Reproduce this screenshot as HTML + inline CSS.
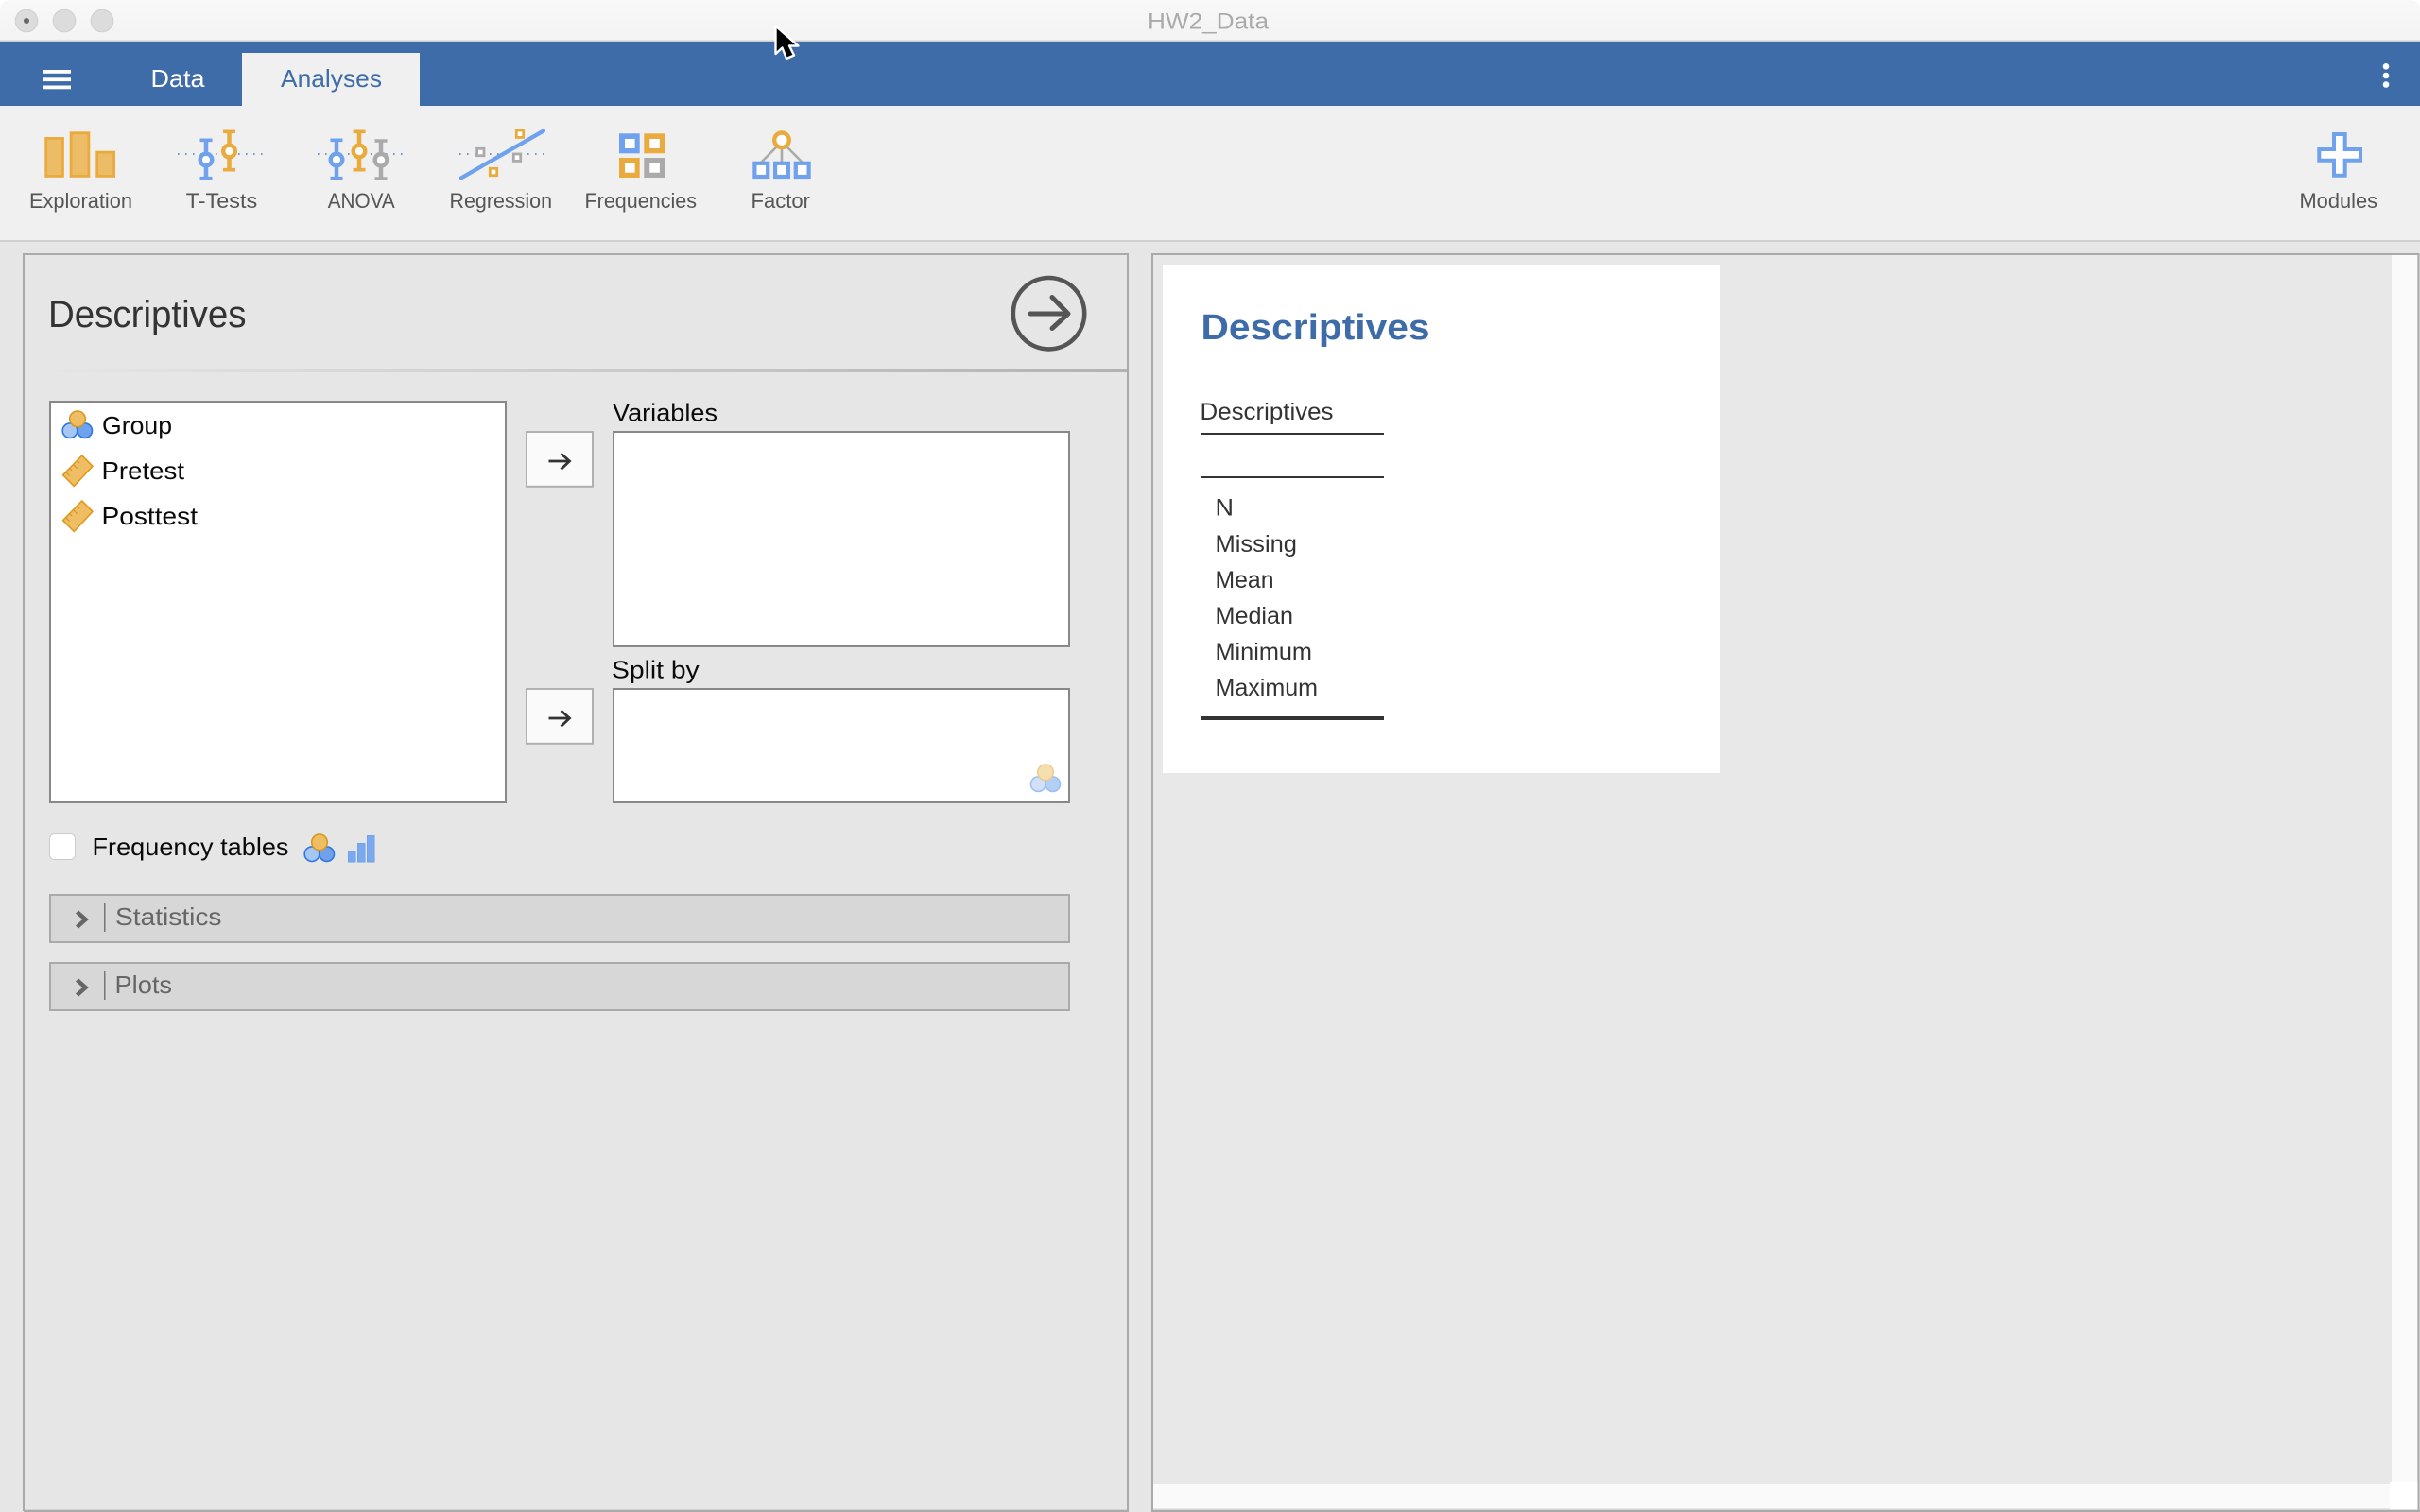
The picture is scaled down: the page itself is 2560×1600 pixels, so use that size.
<!DOCTYPE html>
<html lang="en">
<head>
<meta charset="utf-8">
<title>HW2_Data</title>
<style>
html,body{margin:0;padding:0;background:#fff;width:2560px;height:1600px;overflow:hidden}
svg{display:block}
text{font-family:"Liberation Sans",sans-serif}
</style>
</head>
<body>
<svg xmlns="http://www.w3.org/2000/svg" width="2560" height="1600" viewBox="0 0 2560 1600">
<defs>
  <linearGradient id="tb" x1="0" y1="0" x2="0" y2="1"><stop offset="0" stop-color="#f8f8f8"/><stop offset="1" stop-color="#f3f3f3"/></linearGradient>
  <linearGradient id="dv" x1="0" y1="0" x2="1" y2="0"><stop offset="0" stop-color="#e6e6e6"/><stop offset="1" stop-color="#b2b2b2"/></linearGradient>
  <g id="ruler">
    <polygon points="86.7,482 98,493.3 78.3,514.4 66.6,502.7" fill="#efbd63" stroke="#e09a1c" stroke-width="1.6" stroke-linejoin="round"/>
    <path d="M81.5,487.5l2.6,2.6M77.5,491.5l4.2,4.2M73.5,495.5l2.6,2.6M69.5,499.5l4.2,4.2" stroke="#cf962c" stroke-width="1.1" fill="none"/>
  </g>
</defs>

<!-- page background -->
<rect x="0" y="44" width="2560" height="1556" fill="#e6e6e6"/>

<!-- title bar -->
<path d="M0,44V10A10,10 0 0 1 10,0H2550A10,10 0 0 1 2560,10V44Z" fill="url(#tb)"/>
<rect x="0" y="42.5" width="2560" height="1.5" fill="#cdcdcd"/>
<circle cx="28" cy="22" r="11.8" fill="#dcdcdc" stroke="#cfcfcf"/>
<circle cx="28" cy="22" r="3" fill="#666"/>
<circle cx="68" cy="22" r="11.8" fill="#dcdcdc" stroke="#cfcfcf"/>
<circle cx="108" cy="22" r="11.8" fill="#dcdcdc" stroke="#cfcfcf"/>
<text x="1214" y="30.5" font-size="24" fill="#aaaaaa" textLength="128" lengthAdjust="spacingAndGlyphs">HW2_Data</text>

<!-- blue ribbon -->
<rect x="0" y="44" width="2560" height="68" fill="#3e6ca8"/>
<rect x="45" y="74" width="30" height="3.8" fill="#fff"/>
<rect x="45" y="82.3" width="30" height="3.8" fill="#fff"/>
<rect x="45" y="90.5" width="30" height="3.8" fill="#fff"/>
<rect x="256" y="56" width="188" height="56" fill="#f0f0f0"/>
<text x="159.5" y="92" font-size="26" fill="#ffffff" textLength="57" lengthAdjust="spacingAndGlyphs">Data</text>
<text x="297" y="92" font-size="26" fill="#3e6ca8" textLength="107" lengthAdjust="spacingAndGlyphs">Analyses</text>
<circle cx="2524" cy="70.3" r="3.3" fill="#fff"/>
<circle cx="2524" cy="80" r="3.3" fill="#fff"/>
<circle cx="2524" cy="89.5" r="3.3" fill="#fff"/>

<!-- toolbar -->
<rect x="0" y="112" width="2560" height="142" fill="#f0f0f0"/>
<rect x="0" y="254" width="2560" height="2" fill="#d0d0d0"/>

<!-- Exploration -->
<g fill="#ecbc66" stroke="#e9ab3e" stroke-width="2.8">
  <rect x="48.7" y="146.4" width="17.8" height="40"/>
  <rect x="75.1" y="140.7" width="18.8" height="45.7"/>
  <rect x="102.7" y="161.1" width="17.9" height="25.3"/>
</g>
<text x="31" y="220" font-size="22" fill="#555" textLength="109" lengthAdjust="spacingAndGlyphs">Exploration</text>

<!-- T-Tests -->
<line x1="188" y1="163" x2="279" y2="163" stroke="#4f78b8" stroke-width="1.5" stroke-dasharray="1.6 6.4"/>
<g fill="#fff">
  <path d="M211.5,148.3h13M211.5,188.7h13" stroke="#6fa1ec" stroke-width="3.6" fill="none"/>
  <path d="M218,148.3V188.7" stroke="#6fa1ec" stroke-width="4.5" fill="none"/>
  <circle cx="218" cy="169" r="6.3" stroke="#6fa1ec" stroke-width="4.4"/>
  <path d="M236,139.3h13M236,179.7h13" stroke="#e9ab3e" stroke-width="3.6" fill="none"/>
  <path d="M242.5,139.3V179.7" stroke="#e9ab3e" stroke-width="4.5" fill="none"/>
  <circle cx="242.5" cy="160" r="6.3" stroke="#e9ab3e" stroke-width="4.4"/>
</g>
<text x="196.7" y="220" font-size="22" fill="#555" textLength="75.5" lengthAdjust="spacingAndGlyphs">T-Tests</text>

<!-- ANOVA -->
<line x1="336" y1="163" x2="427" y2="163" stroke="#4f78b8" stroke-width="1.5" stroke-dasharray="1.6 6.4"/>
<g fill="#fff">
  <path d="M349.5,148.3h13M349.5,188.7h13" stroke="#6fa1ec" stroke-width="3.6" fill="none"/>
  <path d="M356,148.3V188.7" stroke="#6fa1ec" stroke-width="4.5" fill="none"/>
  <circle cx="356" cy="169" r="6.3" stroke="#6fa1ec" stroke-width="4.4"/>
  <path d="M373.5,139.3h13M373.5,179.7h13" stroke="#e9ab3e" stroke-width="3.6" fill="none"/>
  <path d="M380,139.3V179.7" stroke="#e9ab3e" stroke-width="4.5" fill="none"/>
  <circle cx="380" cy="160" r="6.3" stroke="#e9ab3e" stroke-width="4.4"/>
  <path d="M396.5,149h13M396.5,189h13" stroke="#aaaaaa" stroke-width="3.6" fill="none"/>
  <path d="M403,149V189" stroke="#aaaaaa" stroke-width="4.5" fill="none"/>
  <circle cx="403" cy="169.3" r="6.3" stroke="#aaaaaa" stroke-width="4.4"/>
</g>
<text x="346.7" y="220" font-size="22" fill="#555" textLength="71" lengthAdjust="spacingAndGlyphs">ANOVA</text>

<!-- Regression -->
<line x1="486" y1="163" x2="577" y2="163" stroke="#4f78b8" stroke-width="1.5" stroke-dasharray="1.6 6.4"/>
<line x1="488" y1="188.3" x2="575" y2="138.5" stroke="#6fa1ec" stroke-width="4.2" stroke-linecap="round"/>
<g fill="#fff" stroke-width="2.8">
  <rect x="546.3" y="138" width="7.4" height="7.4" stroke="#e9ab3e"/>
  <rect x="504.6" y="157.3" width="7.4" height="7.4" stroke="#aaaaaa"/>
  <rect x="543.3" y="163" width="7.4" height="7.4" stroke="#aaaaaa"/>
  <rect x="518.3" y="178.3" width="7.4" height="7.4" stroke="#e9ab3e"/>
</g>
<text x="475.5" y="220" font-size="22" fill="#555" textLength="108.5" lengthAdjust="spacingAndGlyphs">Regression</text>

<!-- Frequencies -->
<rect x="655" y="141.3" width="21.7" height="21" fill="#6fa1ec"/>
<rect x="661" y="147" width="10.6" height="10" fill="#fff"/>
<rect x="681.3" y="141.3" width="21.7" height="21" fill="#e9ab3e"/>
<rect x="687.3" y="147" width="10.6" height="10" fill="#fff"/>
<rect x="655" y="167" width="21.7" height="21" fill="#e9ab3e"/>
<rect x="661" y="172.7" width="10.6" height="10" fill="#fff"/>
<rect x="681.3" y="167" width="21.7" height="21" fill="#aaaaaa"/>
<rect x="687.3" y="172.7" width="10.6" height="10" fill="#fff"/>
<text x="618.5" y="220" font-size="22" fill="#555" textLength="118.5" lengthAdjust="spacingAndGlyphs">Frequencies</text>

<!-- Factor -->
<path d="M827,150L805,172M827,150V172M827,150L849,172" stroke="#aaaaaa" stroke-width="2.6" fill="none"/>
<circle cx="827" cy="148.3" r="7.8" fill="#fff" stroke="#e9ab3e" stroke-width="4.4"/>
<g fill="#fff" stroke="#6fa1ec" stroke-width="4.2">
  <rect x="798.4" y="172.8" width="13.8" height="14.2"/>
  <rect x="820.1" y="172.8" width="13.8" height="14.2"/>
  <rect x="841.8" y="172.8" width="13.8" height="14.2"/>
</g>
<text x="794.5" y="220" font-size="22" fill="#555" textLength="62.5" lengthAdjust="spacingAndGlyphs">Factor</text>

<!-- Modules -->
<path d="M2469,142H2480.7V158H2497V169.7H2480.7V185.7H2469V169.7H2453.3V158H2469Z" fill="#fff" stroke="#6fa1ec" stroke-width="4"/>
<text x="2432.5" y="220" font-size="22" fill="#555" textLength="82.5" lengthAdjust="spacingAndGlyphs">Modules</text>

<!-- left options panel -->
<path d="M25,1599V269H1193V1599" fill="#e6e6e6" stroke="#aaaaaa" stroke-width="2"/>
<rect x="25" y="1597.7" width="1169" height="2.3" fill="#aaaaaa"/>
<text x="51" y="346" font-size="40" fill="#333333" textLength="209.5" lengthAdjust="spacingAndGlyphs">Descriptives</text>
<rect x="40" y="390" width="1152" height="4" fill="url(#dv)"/>
<circle cx="1109.5" cy="331.7" r="37.7" fill="none" stroke="#555555" stroke-width="4.6"/>
<path d="M1090,332H1129M1113,314.5L1130,332L1113,347.5" fill="none" stroke="#555555" stroke-width="5" stroke-linecap="round" stroke-linejoin="round"/>

<!-- lists -->
<rect x="53" y="425" width="482" height="424" fill="#fff" stroke="#888888" stroke-width="2"/>
<rect x="649" y="457" width="482" height="227" fill="#fff" stroke="#888888" stroke-width="2"/>
<rect x="649" y="729" width="482" height="120" fill="#fff" stroke="#888888" stroke-width="2"/>

<!-- group icon row -->
<circle cx="74" cy="455.7" r="7.8" fill="#a6c7f4" stroke="#2f78e4" stroke-width="1.6"/>
<circle cx="89.7" cy="455.7" r="7.8" fill="#6fa1ec" stroke="#2f78e4" stroke-width="1.6"/>
<circle cx="82" cy="443.3" r="8.3" fill="#efbd63" stroke="#d8971e" stroke-width="1.5"/>
<text x="108" y="459" font-size="26" fill="#0a0a0a" textLength="74" lengthAdjust="spacingAndGlyphs">Group</text>

<use href="#ruler"/>
<text x="107.5" y="507" font-size="26" fill="#0a0a0a" textLength="87.5" lengthAdjust="spacingAndGlyphs">Pretest</text>
<use href="#ruler" y="48"/>
<text x="107.5" y="555" font-size="26" fill="#0a0a0a" textLength="101.5" lengthAdjust="spacingAndGlyphs">Posttest</text>

<!-- arrow buttons -->
<rect x="557" y="457" width="70" height="57.8" fill="#fafafa" stroke="#b0b0b0" stroke-width="2"/>
<path d="M580.5,488H602.5M593.5,480L602.5,488L593.5,496.5" fill="none" stroke="#333" stroke-width="2.8"/>
<rect x="557" y="729" width="70" height="57.8" fill="#fafafa" stroke="#b0b0b0" stroke-width="2"/>
<path d="M580.5,760H602.5M593.5,752L602.5,760L593.5,768.5" fill="none" stroke="#333" stroke-width="2.8"/>

<text x="648" y="445.7" font-size="26" fill="#0a0a0a" textLength="111" lengthAdjust="spacingAndGlyphs">Variables</text>
<text x="647" y="717.7" font-size="26" fill="#0a0a0a" textLength="92.7" lengthAdjust="spacingAndGlyphs">Split by</text>

<!-- split by faded icon -->
<circle cx="1098.3" cy="829.7" r="7.8" fill="#d2e1f9" stroke="#9dc0f3" stroke-width="1.6"/>
<circle cx="1113.7" cy="829.7" r="7.8" fill="#b3cff6" stroke="#9dc0f3" stroke-width="1.6"/>
<circle cx="1106" cy="817.3" r="8.3" fill="#f7deaf" stroke="#ebcb90" stroke-width="1.5"/>

<!-- checkbox -->
<rect x="52.5" y="882.5" width="27" height="27" rx="5" fill="#fff" stroke="#cccccc" stroke-width="1"/>
<text x="97.5" y="905" font-size="26" fill="#0a0a0a" textLength="208" lengthAdjust="spacingAndGlyphs">Frequency tables</text>
<circle cx="330" cy="903.7" r="7.8" fill="#a6c7f4" stroke="#2f78e4" stroke-width="1.6"/>
<circle cx="345.7" cy="903.7" r="7.8" fill="#6fa1ec" stroke="#2f78e4" stroke-width="1.6"/>
<circle cx="338" cy="891.3" r="8.3" fill="#efbd63" stroke="#d8971e" stroke-width="1.5"/>
<g fill="#7ba9ed" stroke="#6fa1ec" stroke-width="1">
  <rect x="368.5" y="900.5" width="7.5" height="11.5"/>
  <rect x="378.5" y="892.5" width="7.5" height="19.5"/>
  <rect x="388.5" y="884.5" width="7.5" height="27.5"/>
</g>

<!-- collapsible headers -->
<rect x="53" y="947" width="1078" height="50" fill="#d7d7d7" stroke="#aaaaaa" stroke-width="2"/>
<path d="M81.5,965L90.5,973L81.5,981" fill="none" stroke="#666" stroke-width="4.5"/>
<rect x="110" y="956" width="1.5" height="30" fill="#777"/>
<text x="122" y="979" font-size="26" fill="#666666" textLength="112.5" lengthAdjust="spacingAndGlyphs">Statistics</text>

<rect x="53" y="1019" width="1078" height="50" fill="#d7d7d7" stroke="#aaaaaa" stroke-width="2"/>
<path d="M81.5,1037L90.5,1045L81.5,1053" fill="none" stroke="#666" stroke-width="4.5"/>
<rect x="110" y="1028" width="1.5" height="30" fill="#777"/>
<text x="121.5" y="1051" font-size="26" fill="#666666" textLength="60.5" lengthAdjust="spacingAndGlyphs">Plots</text>

<!-- results panel -->
<path d="M1219,1599V269H2558.5V1599" fill="#e8e8e8" stroke="#aaaaaa" stroke-width="2"/>
<rect x="1218" y="1597.7" width="1342" height="2.3" fill="#aaaaaa"/>
<rect x="2530" y="270" width="27" height="1298" fill="#fafafa"/>
<rect x="1220" y="1570" width="1308" height="26" fill="#fafafa"/>
<rect x="2528" y="1568" width="29.5" height="29.5" fill="#ffffff"/>

<rect x="1230" y="280" width="590" height="538" fill="#ffffff"/>
<text x="1270.5" y="359" font-size="38" font-weight="700" fill="#3e6ca8" textLength="242" lengthAdjust="spacingAndGlyphs">Descriptives</text>
<text x="1269.5" y="444" font-size="25" fill="#333333" textLength="141" lengthAdjust="spacingAndGlyphs">Descriptives</text>
<rect x="1270" y="458" width="194" height="2" fill="#333"/>
<rect x="1270" y="504" width="194" height="2" fill="#333"/>
<text x="1285.5" y="545.7" font-size="25" fill="#333333" textLength="19.5" lengthAdjust="spacingAndGlyphs">N</text>
<text x="1285.5" y="584" font-size="25" fill="#333333" textLength="86.5" lengthAdjust="spacingAndGlyphs">Missing</text>
<text x="1285.5" y="622" font-size="25" fill="#333333" textLength="62" lengthAdjust="spacingAndGlyphs">Mean</text>
<text x="1285.5" y="660" font-size="25" fill="#333333" textLength="82.5" lengthAdjust="spacingAndGlyphs">Median</text>
<text x="1285.5" y="698" font-size="25" fill="#333333" textLength="102.5" lengthAdjust="spacingAndGlyphs">Minimum</text>
<text x="1285.5" y="736" font-size="25" fill="#333333" textLength="108.5" lengthAdjust="spacingAndGlyphs">Maximum</text>
<rect x="1270" y="758" width="194" height="4" fill="#333"/>

<!-- cursor -->
<path d="M820.5,27.5V57L827.5,50.5L832,62L840,58.5L835,48.5H844.5Z" fill="#000" stroke="#fff" stroke-width="2.4" stroke-linejoin="round"/>
</svg>
</body>
</html>
